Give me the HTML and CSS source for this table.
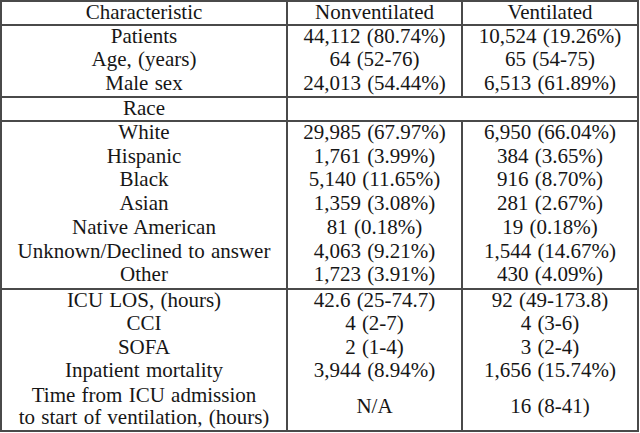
FILE: index.html
```html
<!DOCTYPE html>
<html>
<head>
<meta charset="utf-8">
<link rel="stylesheet" href="styles.css">
</head>
<body>
<table class="t">
  <thead>
    <tr class="hd"><th class="c1">Characteristic</th><th class="c2">Nonventilated</th><th class="c3">Ventilated</th></tr>
  </thead>
  <tbody class="g1">
    <tr><td>Patients</td><td>44,112 (80.74%)</td><td>10,524 (19.26%)</td></tr>
    <tr><td>Age, (years)</td><td>64 (52-76)</td><td>65 (54-75)</td></tr>
    <tr><td>Male sex</td><td>24,013 (54.44%)</td><td>6,513 (61.89%)</td></tr>
  </tbody>
  <tbody class="g0">
    <tr><td>Race</td><td colspan="2"></td></tr>
  </tbody>
  <tbody class="g2">
    <tr><td>White</td><td>29,985 (67.97%)</td><td>6,950 (66.04%)</td></tr>
    <tr><td>Hispanic</td><td>1,761 (3.99%)</td><td>384 (3.65%)</td></tr>
    <tr><td>Black</td><td>5,140 (11.65%)</td><td>916 (8.70%)</td></tr>
    <tr><td>Asian</td><td>1,359 (3.08%)</td><td>281 (2.67%)</td></tr>
    <tr><td>Native American</td><td>81 (0.18%)</td><td>19 (0.18%)</td></tr>
    <tr><td>Unknown/Declined to answer</td><td>4,063 (9.21%)</td><td>1,544 (14.67%)</td></tr>
    <tr><td>Other</td><td>1,723 (3.91%)</td><td>430 (4.09%)</td></tr>
  </tbody>
  <tbody class="g3">
    <tr><td>ICU LOS, (hours)</td><td>42.6 (25-74.7)</td><td>92 (49-173.8)</td></tr>
    <tr><td>CCI</td><td>4 (2-7)</td><td>4 (3-6)</td></tr>
    <tr><td>SOFA</td><td>2 (1-4)</td><td>3 (2-4)</td></tr>
    <tr><td>Inpatient mortality</td><td>3,944 (8.94%)</td><td>1,656 (15.74%)</td></tr>
    <tr class="two"><td>Time from ICU admission<br>to start of ventilation, (hours)</td><td>N/A</td><td>16 (8-41)</td></tr>
  </tbody>
</table>
</body>
</html>
```
FILE: styles.css
```css
html, body {
  margin: 0;
  padding: 0;
  background: #ffffff;
}
.t {
  border-collapse: separate;
  border-spacing: 0;
  table-layout: fixed;
  width: 639px;
  margin: 0;
  font-family: "Liberation Serif", "Times New Roman", serif;
  font-size: 21px;
  word-spacing: 1px;
  color: #161616;
  border: 2px solid #4a4a4a;
}
.t th, .t td {
  box-sizing: border-box;
  font-weight: normal;
  text-align: center;
  vertical-align: middle;
  padding: 0 0 2px 0;
  white-space: nowrap;
}
.t th + th, .t td + td {
  border-left: 2px solid #4a4a4a;
}
.c1 { width: 284px; }
.c2 { width: 175px; }
.c3 { width: 176px; }
.t th {
  line-height: 20px;
}
.t tbody tr:first-child td {
  border-top: 2px solid #4a4a4a;
}
.g1 td { line-height: 21.33px; }
.g0 td { line-height: 20px; }
.g2 td { line-height: 21.7px; }
.g3 td { line-height: 21.5px; }
.g3 .two td { line-height: 22px; }
```
